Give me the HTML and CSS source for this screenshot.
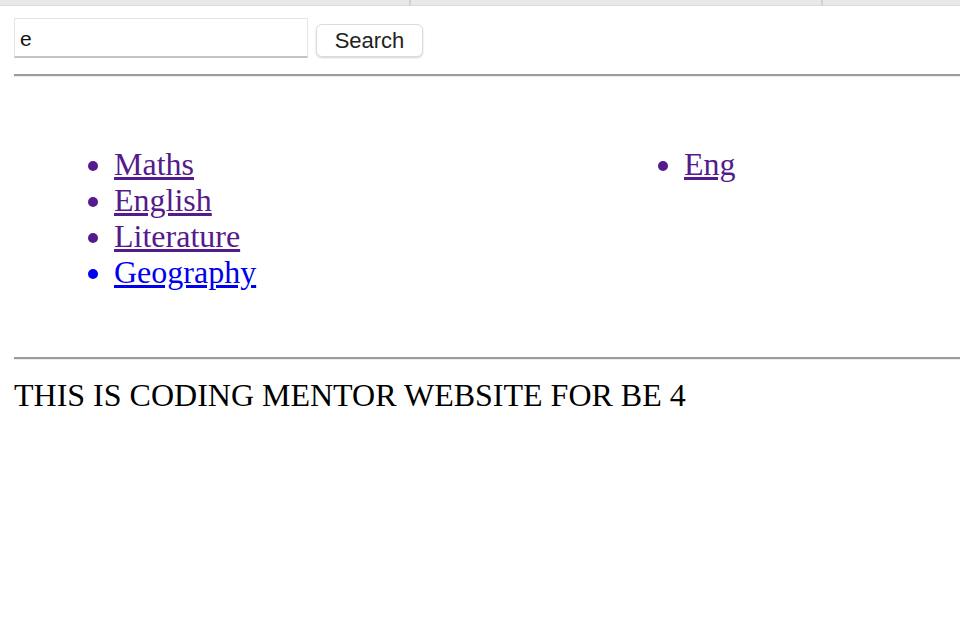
FILE: index.html
```html
<!DOCTYPE html>
<html>
<head>
<meta charset="utf-8">
<link rel="stylesheet" href="styles.css">
</head>
<body>
<div class="tabbar">
  <div class="tab tab-a"></div>
  <div class="tab tab-b"></div>
  <div class="tab tab-c"></div>
</div>
<div class="page">
  <form class="search">
    <input class="search-input" type="text" value="e">
    <button class="search-btn" type="button">Search</button>
  </form>
  <hr class="rule rule-top">
  <div class="lists">
    <ul class="list">
      <li><a class="visited" href="#">Maths</a></li>
      <li><a class="visited" href="#">English</a></li>
      <li><a class="visited" href="#">Literature</a></li>
      <li class="fresh"><a class="fresh-link" href="#">Geography</a></li>
    </ul>
    <ul class="list">
      <li><a class="visited" href="#">Eng</a></li>
    </ul>
  </div>
  <hr class="rule rule-bottom">
  <p class="footer-text">THIS IS CODING MENTOR WEBSITE FOR BE 4</p>
</div>
</body>
</html>
```
FILE: styles.css
```css
html, body {
  margin: 0;
  padding: 0;
  background: #ffffff;
}
body {
  font-family: "Liberation Serif", "Times New Roman", serif;
  color: #000;
  overflow: hidden;
}
.tabbar {
  display: flex;
  height: 5px;
  background: #e8e8e8;
  border-bottom: 1px solid #dadada;
}
.tab {
  height: 100%;
}
.tab-a {
  width: 409px;
  border-right: 2px solid #d2d2d2;
}
.tab-b {
  width: 410px;
  border-right: 2px solid #d2d2d2;
}
.tab-c {
  flex: 1;
}
.page {
  padding-left: 14px;
}
.search {
  display: flex;
  align-items: flex-end;
  gap: 8px;
  margin: 12px 0 0 0;
  height: 40px;
}
.search-input {
  box-sizing: border-box;
  width: 294px;
  height: 40px;
  margin: 0;
  padding: 2px 5px 0 5px;
  border: 1px solid #e4e4e4;
  border-bottom: 2px solid #c4c4c4;
  font-family: "Liberation Sans", Arial, sans-serif;
  font-size: 21px;
  color: #111;
  outline: none;
}
.search-btn {
  box-sizing: border-box;
  height: 33px;
  width: 107px;
  margin: 0 0 1px 0;
  padding: 0;
  background: #fff;
  border: 1px solid #dcdcdc;
  border-radius: 6px;
  box-shadow: 0 1px 2px rgba(0, 0, 0, 0.18);
  font-family: "Liberation Sans", Arial, sans-serif;
  font-size: 22px;
  color: #222;
}
.rule {
  height: 0;
  margin: 0 -14px 0 0;
  border: 0;
  border-top: 2px solid #9b9b9b;
  border-bottom: 1px solid #ececec;
}
.rule-top {
  margin-top: 16px;
}
.lists {
  display: grid;
  grid-template-columns: 570px 1fr;
  margin-top: 69px;
}
.list {
  margin: 0;
  padding-left: 100px;
  font-size: 32px;
  line-height: 36px;
  color: #551a8b;
}
.list li {
  margin: 0;
}
.visited {
  color: #551a8b;
  text-decoration: underline;
}
.fresh {
  color: #0000ee;
}
.fresh-link {
  color: #0000ee;
  text-decoration: underline;
}
.rule-bottom {
  margin-top: 67px;
}
.footer-text {
  margin: 17px 0 0 0;
  font-size: 32px;
  line-height: 36px;
}
```
